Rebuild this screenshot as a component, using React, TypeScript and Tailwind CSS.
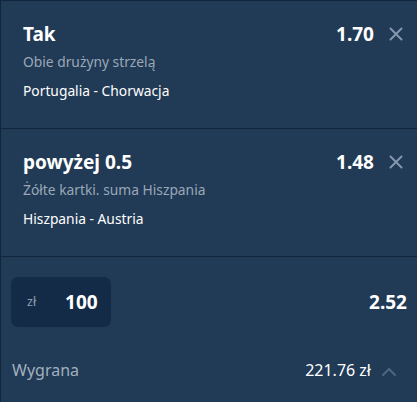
import React from "react";

type Selection = {
  pick: string;
  odds: string;
  market: string;
  match: string;
};

const selections: Selection[] = [
  { pick: "Tak", odds: "1.70", market: "Obie drużyny strzelą", match: "Portugalia - Chorwacja" },
  { pick: "powyżej 0.5", odds: "1.48", market: "Żółte kartki. suma Hiszpania", match: "Hiszpania - Austria" },
];

function CloseIcon() {
  return (
    <svg width="14" height="14" viewBox="0 0 14 14" fill="none" stroke="#8697ad" strokeWidth="2" strokeLinecap="round">
      <path d="M1.5 1.5 L12.5 12.5 M12.5 1.5 L1.5 12.5" />
    </svg>
  );
}

function ChevronUp() {
  return (
    <svg width="16" height="10" viewBox="0 0 16 10" fill="none" stroke="#4f6680" strokeWidth="2" strokeLinecap="round" strokeLinejoin="round">
      <path d="M2 8 L8 2 L14 8" />
    </svg>
  );
}

function SelectionRow({ s }: { s: Selection }) {
  return (
    <div className="border-b border-[#11263c] pl-[22px] pr-[14px] pt-[20px] h-[128px]">
      <div className="flex items-center justify-between h-[26px]">
        <span className="text-[19px] font-bold text-white leading-none">{s.pick}</span>
        <div className="flex items-center gap-[15px]">
          <span className="text-[19px] font-bold text-white leading-none">{s.odds}</span>
          <CloseIcon />
        </div>
      </div>
      <div className="mt-[6px] text-[13.8px] text-[#9aa8b8] leading-[18px]">{s.market}</div>
      <div className="mt-[11px] text-[13.8px] text-white leading-[18px]">{s.match}</div>
    </div>
  );
}

export default function App() {
  return (
    <div
      className="w-[417px] h-[402px] bg-[#213a55] border-l border-t border-[#11263c] overflow-hidden"
      style={{ fontFamily: '"Noto Sans", "Open Sans", sans-serif' }}
    >
      {selections.map((s) => (
        <SelectionRow key={s.pick} s={s} />
      ))}
      <div className="pl-[10px] pr-[10px] pt-[20px]">
        <div className="flex items-center justify-between">
          <div className="w-[100px] h-[50px] rounded-[7px] bg-[#132b46] flex items-center pl-[16px]">
            <span className="text-[12.5px] text-[#8f9db0]">zł</span>
            <span className="ml-[29px] text-[19px] font-bold text-white">100</span>
          </div>
          <span className="text-[19px] font-bold text-white">2.52</span>
        </div>
        <div className="mt-[31px] flex items-center justify-between pl-[1px] pr-[10px]">
          <span className="text-[16px] text-[#a3b0bf]">Wygrana</span>
          <div className="flex items-center gap-[10px]">
            <span className="text-[16px] text-white">221.76 zł</span>
            <span className="pt-[4px]">
              <ChevronUp />
            </span>
          </div>
        </div>
      </div>
    </div>
  );
}
